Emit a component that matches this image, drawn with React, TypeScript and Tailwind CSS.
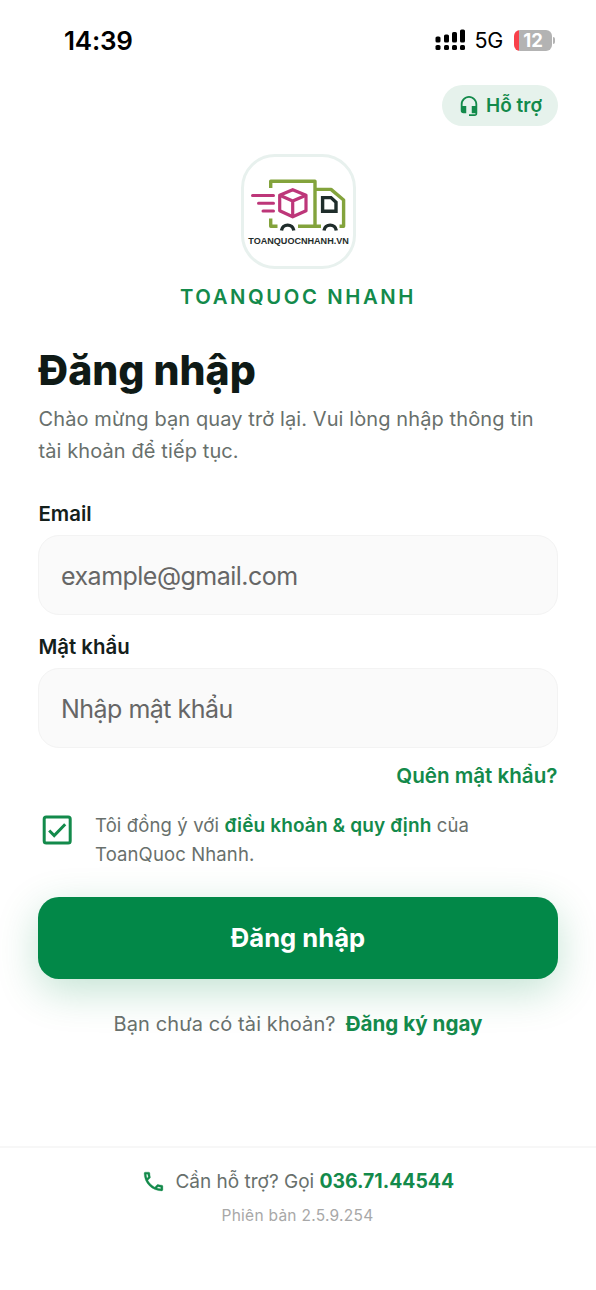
import { useState } from 'react';
import type { ReactNode } from 'react';

function StatusBar() {
  return (
    <div className="flex h-[80px] items-center justify-between pl-[64px] pr-[41px]">
      <span className="text-[26px] font-semibold tracking-[-0.2px] text-black">14:39</span>
      <div className="flex items-center">
        <svg width="31" height="22" viewBox="0 0 31 22" fill="#000">
          <rect x="0.5" y="7.5" width="5" height="6" rx="1.6" />
          <rect x="0.5" y="16" width="5" height="5" rx="1.6" />
          <rect x="9" y="5.5" width="5" height="8" rx="1.6" />
          <rect x="9" y="16" width="5" height="5" rx="1.6" />
          <rect x="17" y="3" width="5" height="10.5" rx="1.6" />
          <rect x="17" y="16" width="5" height="5" rx="1.6" />
          <rect x="25" y="0.5" width="5" height="13" rx="1.6" />
          <rect x="25" y="16" width="5" height="5" rx="1.6" />
        </svg>
        <span className="ml-[8px] pt-px text-[21.5px] tracking-[-0.3px] text-black">5G</span>
        <div className="ml-[11px] flex h-[21px] w-[38px] items-center justify-center overflow-hidden rounded-[6px] bg-[linear-gradient(to_right,#f8414a_5px,#b3b3b3_5px)]">
          <span className="text-[18.5px] font-bold leading-none text-white">12</span>
        </div>
        <div className="ml-[1px] h-[7px] w-[2px] rounded-r-full bg-[#b3b3b3]" />
      </div>
    </div>
  );
}

function TruckLogo() {
  return (
    <svg width="109" height="109" viewBox="14 12 109 109" fill="none" strokeWidth="3.4" className="overflow-visible">
      {/* truck body */}
      <g stroke="#83a33c" strokeLinejoin="round">
        <path d="M40.7 43V36.3H85V81.3H68" />
        <path d="M40.7 73.5V81.3H47.5" />
        <path d="M85 44.4H101L113.6 55V81.3H109.5M85 81.3H91" />
      </g>
      <path d="M92.6 52.6H101L106 57.2V66.2H92.6Z" stroke="#1f2d2b" />
      {/* wheels */}
      <path d="M51.5 85.5A6.2 6.2 0 0 1 63.8 85.5M94 85.5A6.2 6.2 0 0 1 106.3 85.5" stroke="#1f2d2b" />
      {/* box and speed lines */}
      <g stroke="#bd3679" strokeLinejoin="round">
        <path d="M62.7 44.7L76 50.3V65.7L62.7 71.8L49.7 65.7V50.3Z" strokeWidth="3.2" />
        <path d="M49.7 50.3L62.7 56L76 50.3M62.7 56V71.5" strokeWidth="3.2" />
        <path d="M22.5 50.5H43.5M28.5 58.3H43.5M33 66H43.5" strokeLinecap="round" strokeWidth="3" />
      </g>
      <text x="18.3" y="98.9" textLength="100.5" lengthAdjust="spacingAndGlyphs" fill="#1f2d2b" className="font-['Liberation_Sans'] text-[9.8px] font-bold">
        TOANQUOCNHANH.VN
      </text>
    </svg>
  );
}

function HeadsetIcon() {
  return (
    <svg width="22" height="22" viewBox="0 0 24 24" fill="currentColor">
      <path d="M12,1C7,1 3,5 3,10V17A3,3 0 0,0 6,20H9V12H5V10A7,7 0 0,1 12,3A7,7 0 0,1 19,10V12H15V20H19V21H12V23H18A3,3 0 0,0 21,20V10C21,5 16.97,1 12,1Z" />
    </svg>
  );
}

function PhoneIcon() {
  return (
    <svg width="25" height="25" viewBox="0 0 24 24" fill="#138a4b" stroke="#138a4b" strokeWidth="0.3">
      <path d="M20,15.5C18.8,15.5 17.5,15.3 16.4,14.9C16.3,14.9 16.2,14.9 16.1,14.9C15.8,14.9 15.6,15 15.4,15.2L13.2,17.4C10.4,15.9 8,13.6 6.6,10.8L8.8,8.6C9.1,8.3 9.2,7.9 9,7.6C8.7,6.5 8.5,5.2 8.5,4C8.5,3.5 8,3 7.5,3H4C3.5,3 3,3.5 3,4C3,13.4 10.6,21 20,21C20.5,21 21,20.5 21,20V16.5C21,16 20.5,15.5 20,15.5M5,5H6.5C6.6,5.9 6.8,6.8 7,7.6L5.8,8.8C5.4,7.6 5.1,6.3 5,5M19,19C17.7,18.9 16.4,18.6 15.2,18.2L16.4,17C17.2,17.2 18.1,17.4 19,17.4V19Z" />
    </svg>
  );
}

function Field({ label, children }: { label: ReactNode; children: ReactNode }) {
  return (
    <label className="block">
      <span className="flex h-[42px] items-center pl-[0.5px] pt-px text-[20.4px] font-semibold text-[#14201b]">{label}</span>
      {children}
    </label>
  );
}

const inputClass =
  'block h-[80px] w-full rounded-[21px] border border-[#f3f3f3] bg-[#fafafa] px-[22px] pt-[2px] text-[25px] tracking-[-0.52px] text-[#14201b] outline-none placeholder:text-[#666666] placeholder:opacity-100';

export default function App() {
  const [agreed, setAgreed] = useState(true);

  return (
    <div className="flex h-[1290px] w-[596px] flex-col overflow-hidden bg-white font-['Inter',sans-serif]">
      <StatusBar />

      <div className="px-[38px]">
        <div className="flex justify-end pt-[5px]">
          <button className="flex h-[41px] w-[116px] items-center justify-center gap-[6px] rounded-full bg-[#e6f2ec] text-[19px] font-semibold text-[#138a4b]">
            <HeadsetIcon />
            <span className="pt-px">Hỗ trợ</span>
          </button>
        </div>

        <div className="mt-[28px] flex flex-col items-center">
          <div className="size-[115px] rounded-[34px] border-[3px] border-[#e8f1ee] bg-white">
            <TruckLogo />
          </div>
          <div className="mt-[13px] text-[20.3px] font-semibold leading-[30px] tracking-[2.6px] text-[#138a4b]">
            TOANQUOC NHANH
          </div>
        </div>

        {/* ===== Heading ===== */}
        <h1 className="mt-[32px] pl-[0.5px] text-[41px] font-extrabold leading-[52px] text-[#0f1a16]">
          Đăng nhập
        </h1>
        <p className="mt-[7px] whitespace-nowrap pl-[0.5px] text-[20px] leading-[32px] tracking-[0.1px] text-[#68706c]">
          Chào mừng bạn quay trở lại. Vui lòng nhập thông tin
          <br />
          tài khoản để tiếp tục.
        </p>

        {/* ===== Form ===== */}
        <div className="mt-[26px]">
          <Field label="Email">
            <input type="email" placeholder="example@gmail.com" className={inputClass} />
          </Field>
        </div>
        <div className="mt-[10.5px]">
          <Field label="Mật khẩu">
            <input type="password" placeholder="Nhập mật khẩu" className={inputClass} />
          </Field>
        </div>

        <div className="mt-[13.5px] flex justify-end pr-[0.5px]">
          <button className="text-[20.6px] font-semibold leading-[30px] text-[#138a4b]">Quên mật khẩu?</button>
        </div>

        <div className="mt-[20px] flex items-start">
          <button onClick={() => setAgreed(!agreed)} className="ml-[4px] mt-[4px]">
            <svg width="30" height="30" viewBox="0 0 30 30" fill="none" stroke="#138a4b" strokeWidth="3">
              <rect x="2.2" y="2" width="26" height="26" rx="2" />
              {agreed && <path d="M7.2 15.5L12.2 20.5L23.2 9.2" />}
            </svg>
          </button>
          <p className="ml-[23px] whitespace-nowrap text-[18.5px] leading-[28px] tracking-[0.13px] text-[#68706c]">
            Tôi đồng ý với <span className="text-[19px] font-semibold text-[#138a4b]">điều khoản &amp; quy định</span> của
            <br />
            ToanQuoc Nhanh.
          </p>
        </div>

        <button className="mt-[29px] flex h-[82px] w-full items-center justify-center rounded-[21px] bg-[#028848] text-[25.6px] font-bold text-white shadow-[0_12px_42px_rgba(5,136,71,0.24)]">
          Đăng nhập
        </button>

        <div className="mt-[30px] flex justify-center gap-[10px] text-[20px] leading-[30px]">
          <span className="tracking-[0.1px] text-[#68706c]">Bạn chưa có tài khoản?</span>
          <span className="text-[20.6px] font-bold text-[#138a4b]">Đăng ký ngay</span>
        </div>
      </div>

      <footer className="mt-auto flex h-[144px] flex-col items-center border-t-2 border-[#f7f7f7] pr-px pt-[17px]">
        <div className="flex items-center gap-[9.5px] text-[19px] leading-[32px] text-[#68706c]">
          <PhoneIcon />
          <span>
            Cần hỗ trợ? Gọi <span className="text-[19.4px] font-bold text-[#138a4b]">036.71.44544</span>
          </span>
        </div>
        <span className="mt-[6px] text-[15.5px] leading-[24px] tracking-[0.27px] text-[#a8a8a8]">Phiên bản 2.5.9.254</span>
      </footer>
    </div>
  );
}
